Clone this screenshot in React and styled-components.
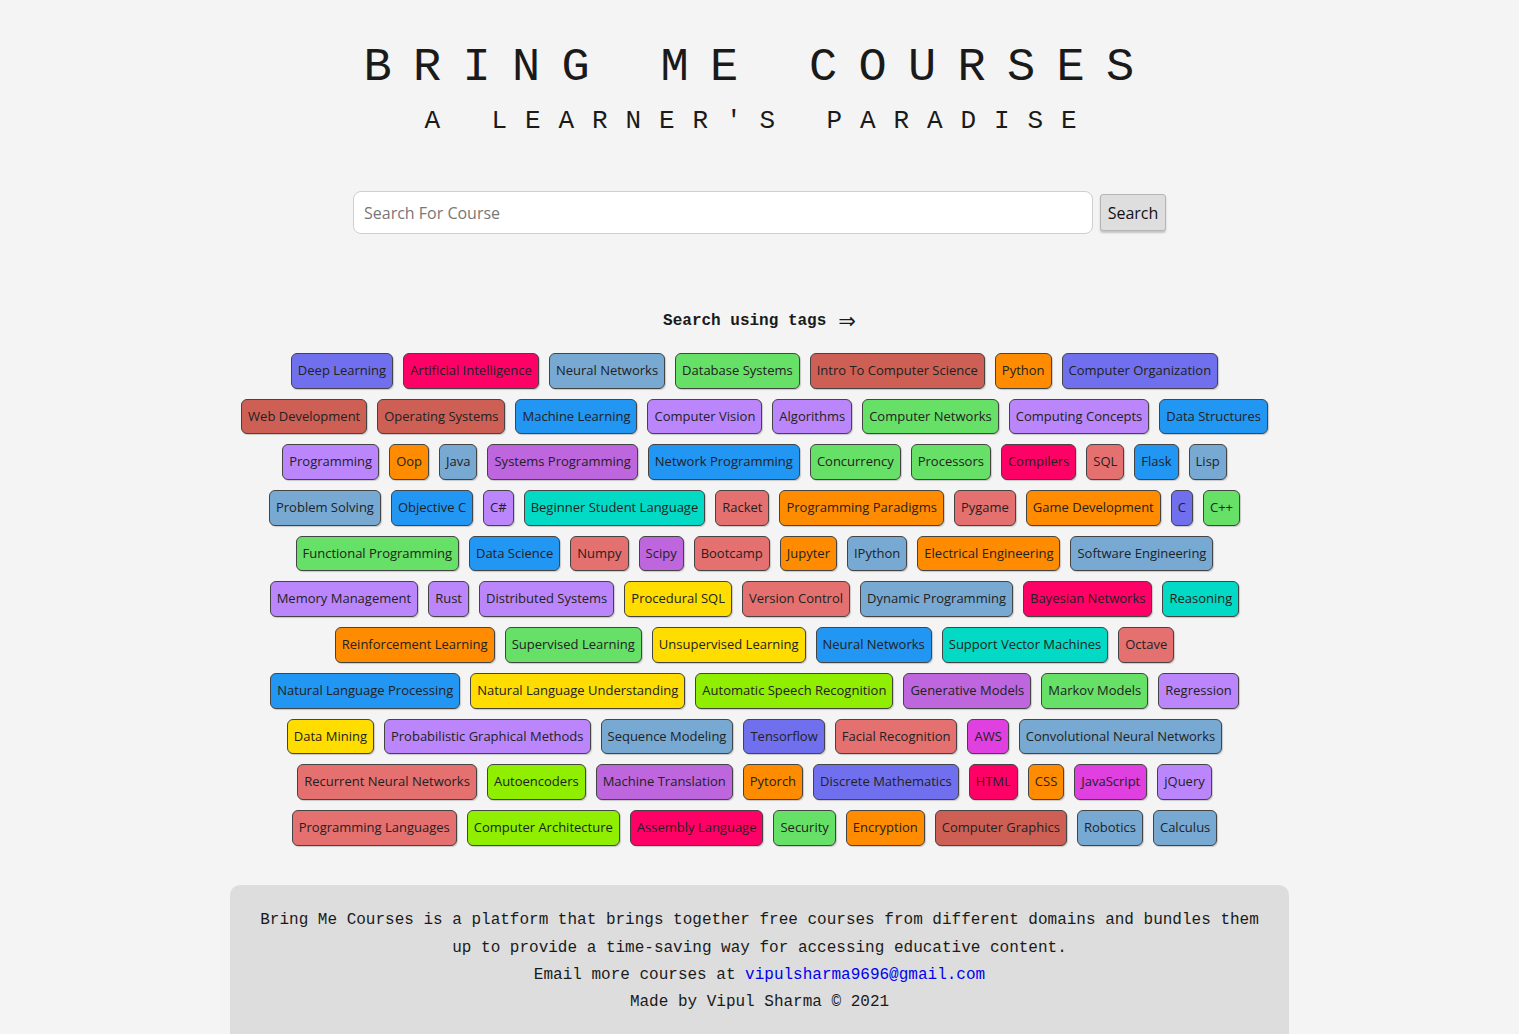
import React from "react";
import styled, { createGlobalStyle } from "styled-components";

const GlobalStyle = createGlobalStyle`
  html, body { margin: 0; padding: 0; background: #f4f4f4; }
  body { font-family: "Open Sans", sans-serif; color: #222; }
`;

const C = {
  slate: "#7070ee",
  pink: "#ff0066",
  steel: "#77a9d3",
  green: "#66e066",
  red: "#cd5f55",
  orange: "#ff8c00",
  blue: "#2196f3",
  lav: "#bb86fc",
  orchid: "#bd66dd",
  salmon: "#e57070",
  gold: "#ffdd00",
  lime: "#90ee00",
  teal: "#03dac5",
  magenta: "#df40df",
};

const TAGS = [
  ["Deep Learning", "slate"], ["Artificial Intelligence", "pink"], ["Neural Networks", "steel"],
  ["Database Systems", "green"], ["Intro To Computer Science", "red"], ["Python", "orange"],
  ["Computer Organization", "slate"],
  ["Web Development", "red"], ["Operating Systems", "red"], ["Machine Learning", "blue"],
  ["Computer Vision", "lav"], ["Algorithms", "lav"], ["Computer Networks", "green"],
  ["Computing Concepts", "lav"], ["Data Structures", "blue"],
  ["Programming", "lav"], ["Oop", "orange"], ["Java", "steel"], ["Systems Programming", "orchid"],
  ["Network Programming", "blue"], ["Concurrency", "green"], ["Processors", "green"],
  ["Compilers", "pink"], ["SQL", "salmon"], ["Flask", "blue"], ["Lisp", "steel"],
  ["Problem Solving", "steel"], ["Objective C", "blue"], ["C#", "lav"],
  ["Beginner Student Language", "teal"], ["Racket", "salmon"], ["Programming Paradigms", "orange"],
  ["Pygame", "salmon"], ["Game Development", "orange"], ["C", "slate"], ["C++", "green"],
  ["Functional Programming", "green"], ["Data Science", "blue"], ["Numpy", "salmon"],
  ["Scipy", "orchid"], ["Bootcamp", "salmon"], ["Jupyter", "orange"], ["IPython", "steel"],
  ["Electrical Engineering", "orange"], ["Software Engineering", "steel"],
  ["Memory Management", "lav"], ["Rust", "lav"], ["Distributed Systems", "lav"],
  ["Procedural SQL", "gold"], ["Version Control", "salmon"], ["Dynamic Programming", "steel"],
  ["Bayesian Networks", "pink"], ["Reasoning", "teal"],
  ["Reinforcement Learning", "orange"], ["Supervised Learning", "green"],
  ["Unsupervised Learning", "gold"], ["Neural Networks", "blue"],
  ["Support Vector Machines", "teal"], ["Octave", "salmon"],
  ["Natural Language Processing", "blue"], ["Natural Language Understanding", "gold"],
  ["Automatic Speech Recognition", "lime"], ["Generative Models", "orchid"],
  ["Markov Models", "green"], ["Regression", "lav"],
  ["Data Mining", "gold"], ["Probabilistic Graphical Methods", "lav"],
  ["Sequence Modeling", "steel"], ["Tensorflow", "slate"], ["Facial Recognition", "salmon"],
  ["AWS", "magenta"], ["Convolutional Neural Networks", "steel"],
  ["Recurrent Neural Networks", "salmon"], ["Autoencoders", "lime"],
  ["Machine Translation", "orchid"], ["Pytorch", "orange"], ["Discrete Mathematics", "slate"],
  ["HTML", "pink"], ["CSS", "orange"], ["JavaScript", "magenta"], ["jQuery", "lav"],
  ["Programming Languages", "salmon"], ["Computer Architecture", "lime"],
  ["Assembly Language", "pink"], ["Security", "green"], ["Encryption", "orange"],
  ["Computer Graphics", "red"], ["Robotics", "steel"], ["Calculus", "steel"],
];

const Page = styled.div`
  display: flex;
  flex-direction: column;
  align-items: center;
  padding-top: 44px;
`;

const Title = styled.h1`
  margin: 0;
  font-family: "Liberation Mono", monospace;
  font-weight: 400;
  font-size: 47px;
  line-height: 48px;
  letter-spacing: 21.3px;
  color: #1a1a1a;
  text-align: center;
`;

const Subtitle = styled.h2`
  margin: 16px 0 0;
  font-family: "Liberation Mono", monospace;
  font-weight: 400;
  font-size: 26px;
  line-height: 26px;
  letter-spacing: 17.9px;
  color: #1a1a1a;
  text-align: center;
`;

const SearchRow = styled.form`
  display: flex;
  align-items: center;
  gap: 7px;
  margin-top: 57px;
`;

const SearchInput = styled.input`
  box-sizing: border-box;
  width: 740px;
  height: 43px;
  padding: 0 10px;
  border: 1px solid #cfcfcf;
  border-radius: 8px;
  background: #fff;
  font-family: "Open Sans", sans-serif;
  font-size: 16px;
  color: #222;
  outline: none;
  &::placeholder { color: #777; }
`;

const SearchButton = styled.button`
  box-sizing: border-box;
  width: 66px;
  height: 37px;
  border: 1px solid #b5b5b5;
  border-radius: 3px;
  background: #dedede;
  box-shadow: 0 2px 2px rgba(0, 0, 0, 0.2);
  font-family: "Open Sans", sans-serif;
  font-size: 16px;
  color: #111;
  padding: 0;
`;

const TagsHeading = styled.div`
  margin-top: 77px;
  display: flex;
  align-items: center;
  gap: 12px;
  font-family: "Liberation Mono", "DejaVu Sans Mono", monospace;
  font-weight: 700;
  font-size: 16px;
  line-height: 20px;
  color: #1a1a1a;
`;

const Arrow = styled.span`
  font-family: "DejaVu Sans", sans-serif;
  font-weight: 400;
  font-size: 21px;
  line-height: 20px;
`;

const TagCloud = styled.div`
  width: 1046px;
  margin-top: 22px;
  display: flex;
  flex-wrap: wrap;
  justify-content: center;
`;

const Tag = styled.button`
  box-sizing: border-box;
  margin: 0 10px 10px 0;
  padding: 8px 6px;
  height: 35.7px;
  border: 1px solid #444;
  border-radius: 6px;
  background: ${(p) => C[p.$tone]};
  box-shadow: 1px 1px 1px rgba(0, 0, 0, 0.18);
  font-family: "Open Sans", sans-serif;
  font-size: 13px;
  line-height: 17.7px;
  color: #222;
  white-space: nowrap;
  cursor: pointer;
`;

const Footer = styled.footer`
  box-sizing: border-box;
  width: 1059px;
  margin-top: 29px;
  padding: 21px 30px 20px;
  background: #dddddd;
  border-radius: 10px 10px 0 0;
  font-family: "Liberation Mono", monospace;
  font-size: 16px;
  color: #1a1a1a;
  text-align: center;
`;

const FooterText = styled.p`
  margin: 0;
  line-height: ${(p) => p.$lh || "27px"};
`;

const Mail = styled.a`
  color: #0000ee;
  text-decoration: none;
`;

export default function App() {
  return (
    <>
      <GlobalStyle />
      <Page>
        <Title>BRING ME COURSES</Title>
        <Subtitle>A LEARNER'S PARADISE</Subtitle>
        <SearchRow onSubmit={(e) => e.preventDefault()}>
          <SearchInput placeholder="Search For Course" />
          <SearchButton type="submit">Search</SearchButton>
        </SearchRow>
        <TagsHeading>
          <span>Search using tags</span>
          <Arrow>⇒</Arrow>
        </TagsHeading>
        <TagCloud>
          {TAGS.map(([name, tone], i) => (
            <Tag key={i} $tone={tone}>{name}</Tag>
          ))}
        </TagCloud>
        <Footer>
          <FooterText $lh="28px">
            Bring Me Courses is a platform that brings together free courses from different domains and bundles them up to provide a time-saving way for accessing educative content.
          </FooterText>
          <FooterText>
            Email more courses at <Mail href="#">vipulsharma9696@gmail.com</Mail>
          </FooterText>
          <FooterText>Made by Vipul Sharma © 2021</FooterText>
        </Footer>
      </Page>
    </>
  );
}
